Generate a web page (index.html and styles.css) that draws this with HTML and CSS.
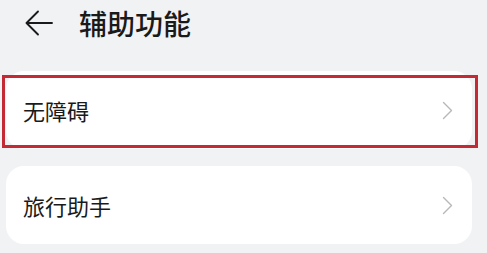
FILE: index.html
```html
<!DOCTYPE html>
<html lang="zh">
<head>
<meta charset="utf-8">
<title>辅助功能</title>
<link rel="stylesheet" href="styles.css">
</head>
<body>
<header class="header">
  <svg class="back" width="28" height="26" viewBox="0 0 28 26" aria-hidden="true">
    <path d="M27 13H2M13 1.5L1.5 13L13 24.5" fill="none" stroke="#1a1a1a" stroke-width="1.9" stroke-linecap="round" stroke-linejoin="round"/>
  </svg>
  <h1 class="title">辅助功能</h1>
</header>
<main class="list">
  <div class="card card-focus">
    <span class="label">无障碍</span>
    <svg class="chev" width="11" height="19" viewBox="0 0 11 19" aria-hidden="true"><path d="M1.5 1.5L9.5 9.5L1.5 17.5" fill="none" stroke="#b8b8b8" stroke-width="1.4" stroke-linecap="round" stroke-linejoin="round"/></svg>
    <span class="focus-ring"></span>
  </div>
  <div class="card">
    <span class="label">旅行助手</span>
    <svg class="chev" width="11" height="19" viewBox="0 0 11 19" aria-hidden="true"><path d="M1.5 1.5L9.5 9.5L1.5 17.5" fill="none" stroke="#b8b8b8" stroke-width="1.4" stroke-linecap="round" stroke-linejoin="round"/></svg>
  </div>
</main>
</body>
</html>
```
FILE: styles.css
```css
html, body {
  margin: 0;
  padding: 0;
}
body {
  background: #f1f2f4;
  width: 487px;
  height: 253px;
  overflow: hidden;
  font-family: "Noto Sans CJK SC", "Noto Sans", sans-serif;
  color: #1a1a1a;
}
.header {
  display: flex;
  align-items: center;
  height: 46px;
  padding-left: 25px;
}
.back {
  display: block;
  flex: none;
}
.title {
  margin: 0 0 0 26px;
  font-size: 28px;
  font-weight: 500;
  line-height: 1;
  letter-spacing: 0;
}
.list {
  display: flex;
  flex-direction: column;
  gap: 17px;
  padding: 25px 15px 0 6px;
}
.card {
  position: relative;
  display: flex;
  align-items: center;
  justify-content: space-between;
  height: 78px;
  padding: 0 19px 0 17px;
  background: #ffffff;
  border-radius: 18px;
}
.label {
  font-size: 22px;
  line-height: 1;
}
.chev {
  display: block;
}
.focus-ring {
  position: absolute;
  left: -4px;
  right: -6px;
  top: 4px;
  bottom: 1px;
  border: 3px solid #c42a33;
  pointer-events: none;
}
```
